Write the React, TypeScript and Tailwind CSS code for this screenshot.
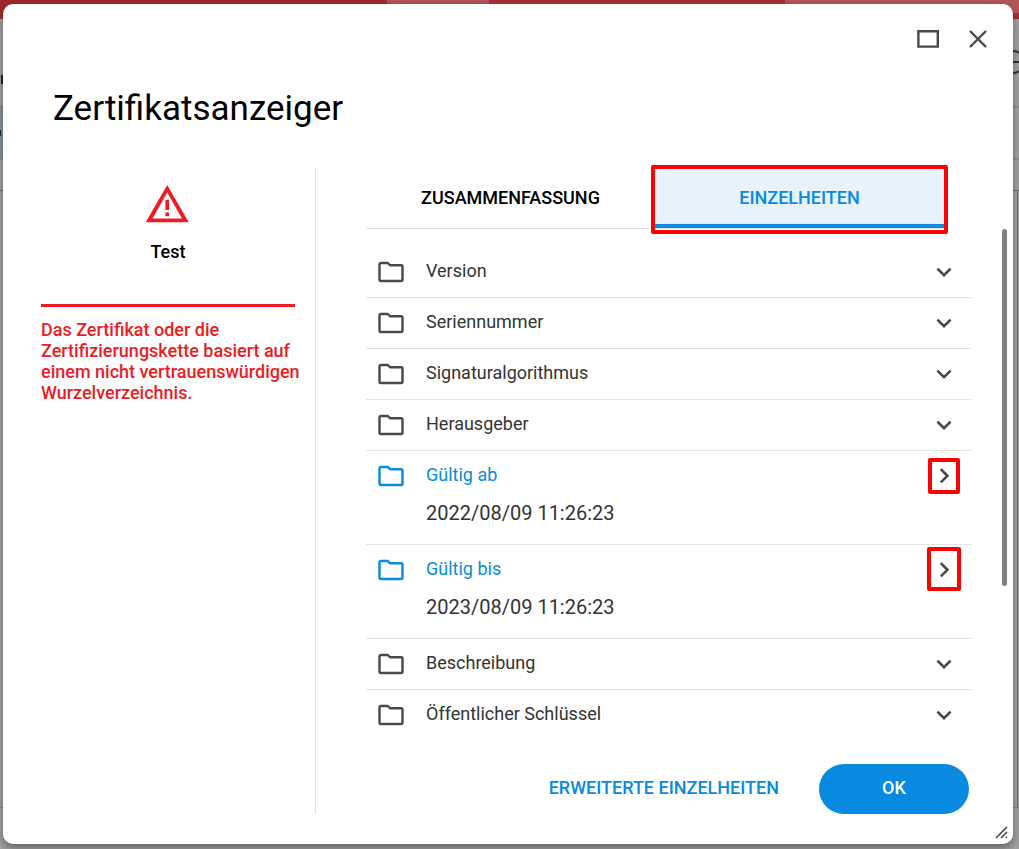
import { useState } from "react";

type Entry = { label: string; value?: string; mark?: "small" | "large" };

const entries: Entry[] = [
  { label: "Version" },
  { label: "Seriennummer" },
  { label: "Signaturalgorithmus" },
  { label: "Herausgeber" },
  { label: "Gültig ab", value: "2022/08/09 11:26:23", mark: "small" },
  { label: "Gültig bis", value: "2023/08/09 11:26:23", mark: "large" },
  { label: "Beschreibung" },
  { label: "Öffentlicher Schlüssel" },
];

function FolderIcon() {
  return (
    <svg width="26" height="22" viewBox="0 0 26 22" fill="none" stroke="currentColor" strokeWidth="2.4" strokeLinejoin="round" aria-hidden="true">
      <path d="M2.6 2H9.8L12 4.2H23Q24.5 4.2 24.5 5.6V18.6Q24.5 20 23 20H2.9Q1.5 20 1.5 18.6V3.3Q1.5 2 2.6 2Z" />
    </svg>
  );
}

function Chevron({ open }: { open: boolean }) {
  return (
    <svg width="16" height="16" viewBox="0 0 16 16" fill="none" stroke="currentColor" strokeWidth="2.6" aria-hidden="true">
      <path d={open ? "M4.8 1.2 11.4 7.8 4.8 14.4" : "M1.4 4.6 8 11.2 14.6 4.6"} />
    </svg>
  );
}

function Backdrop() {
  return (
    <div className="absolute inset-0 -z-10 flex flex-col bg-[#a2a2a2]" aria-hidden="true">
      <div className="flex h-[19px] shrink-0 bg-[#a83033]">
        <div className="w-[38%] bg-[#a0282b]" />
        <div className="w-[10%] bg-[#b35358]" />
        <div className="w-[29%] bg-[#a83033]" />
        <div className="flex-1 border-b-[6px] border-[#a83033] bg-[#b3565b]" />
      </div>
      <div className="h-[89px] border-b-2 border-[#8e8e8e]" />
      <div className="h-[52px] border-b-2 border-[#8e8e8e] bg-gradient-to-r from-[#8a949d] to-[#a2a2a2]" />
      <div className="h-[31px] border-b border-[#707070]" />
      <div className="mr-px flex-1 border-r border-[#707070]" />
      <div className="h-[42px] border-t border-[#858585]" />
      <svg className="absolute top-[48px] right-0" width="6" height="28" fill="none" stroke="#333" strokeWidth="2">
        <path d="M0 3Q4 3 6 5M0 14H6M0 25Q4 25 6 23" />
      </svg>
      <div className="absolute top-[75px] left-px h-[9px] w-0.5 bg-[#222]" />
      <div className="absolute top-[130px] left-0 h-[6px] w-px bg-[#142850]" />
    </div>
  );
}

export default function App() {
  const [open, setOpen] = useState<string[]>(["Gültig ab", "Gültig bis"]);
  const toggle = (label: string) =>
    setOpen((o) => (o.includes(label) ? o.filter((l) => l !== label) : [...o, label]));

  return (
    <div className="relative isolate flex min-h-screen flex-col overflow-hidden pt-1 pr-[6px] pb-[5px] pl-[3px] font-[Roboto,sans-serif] text-black">
      <Backdrop />
      <div
        role="dialog"
        aria-labelledby="dialog-title"
        className="relative flex flex-1 flex-col rounded-[10px] bg-white pb-[30px] shadow-[0_4px_8px_rgba(0,0,0,0.4)]"
      >
        <div className="flex justify-end gap-5 px-5 pt-5 text-[#484848]">
          <button type="button" aria-label="Maximieren" className="flex size-[30px] items-center justify-center">
            <svg width="22" height="18" viewBox="0 0 22 18" fill="none" stroke="currentColor" strokeWidth="2.4">
              <path d="M1.4 1.2H20.8V16.6H1.4Z" />
            </svg>
          </button>
          <button type="button" aria-label="Schließen" className="flex size-[30px] items-center justify-center">
            <svg width="18" height="18" viewBox="0 0 18 18" fill="none" stroke="currentColor" strokeWidth="2.4">
              <path d="M1 1 17 17M17 1 1 17" />
            </svg>
          </button>
        </div>
        <h1 id="dialog-title" className="mt-8 px-[50px] text-[35px] leading-[46px]">
          Zertifikatsanzeiger
        </h1>

        <div className="mt-[37px] flex flex-1">
          <aside className="ml-[38px] flex w-[275px] shrink-0 flex-col border-r border-[#e3e3e3] text-lg leading-[21px] font-medium">
            <div className="mr-5 flex flex-col items-center border-b-[3px] border-[#ed1c24] pt-4 pb-[42px]">
              <svg width="44" height="38" viewBox="0 0 44 38" fill="#ed1c24" aria-hidden="true">
                <path fillRule="evenodd" d="M21.2 0 42.7 37.3H-.3ZM21.2 7.4 6.5 33.6H35.9Z" />
                <path d="M19.4 14.8h3.6v10.2h-3.6ZM19.4 27.6h3.6v3.6h-3.6Z" />
              </svg>
              <p className="mt-[18px]">Test</p>
            </div>
            <p className="mr-3 pt-3 text-[#ed1c24]">
              Das Zertifikat oder die Zertifizierungskette basiert auf einem nicht vertrauenswürdigen
              Wurzelverzeichnis.
            </p>
          </aside>

          <section className="flex flex-1 flex-col pr-[6px] pl-[50px]">
            <div role="tablist" className="mr-[63px] flex h-[60px] border-b border-[#e3e3e3] text-lg font-medium">
              <button type="button" role="tab" aria-selected={false} className="flex-1 pb-0.5">
                ZUSAMMENFASSUNG
              </button>
              <button
                type="button"
                role="tab"
                aria-selected={true}
                className="relative flex-1 border-b-4 border-[#078adf] bg-[#e6f3fd] pt-0.5 text-[#078adf]"
              >
                EINZELHEITEN
                <span className="pointer-events-none absolute -inset-x-1 -top-1 -bottom-[10px] rounded-xs border-4 border-[#ff0000]" />
              </button>
            </div>

            <div className="flex flex-1 justify-between">
              <ul className="mr-[31px] flex-1 pt-[18px] text-lg">
                {entries.map((e, i) => {
                  const isOpen = open.includes(e.label);
                  return (
                    <li key={e.label} className={i < entries.length - 1 ? "border-b border-[#e3e3e3]" : ""}>
                      <button
                        type="button"
                        aria-expanded={isOpen}
                        onClick={() => toggle(e.label)}
                        className={`flex h-[50px] w-full items-center pr-[19px] pl-3 ${isOpen ? "text-[#078adf]" : "text-[#484848]"}`}
                      >
                        <FolderIcon />
                        <span className={`ml-[22px] flex-1 pb-[2px] text-left ${isOpen ? "" : "text-[#333]"}`}>{e.label}</span>
                        <span className="relative text-[#484848]">
                          <Chevron open={isOpen} />
                          {e.mark === "small" && (
                            <span className="pointer-events-none absolute -inset-x-2 -inset-y-[10px] rounded-xs border-4 border-[#ff0000]" />
                          )}
                          {e.mark === "large" && (
                            <span className="pointer-events-none absolute -inset-x-[9px] -top-[15px] -bottom-[13px] rounded-xs border-4 border-[#ff0000]" />
                          )}
                        </span>
                      </button>
                      {isOpen && <p className="h-[43px] pl-[60px] text-xl leading-6 text-[#333]">{e.value}</p>}
                    </li>
                  );
                })}
              </ul>
              <div className="h-[357px] w-[5px] rounded-full bg-[#808080]" />
            </div>

            <div className="mt-auto mr-[38px] flex items-center justify-end gap-10 text-lg font-medium">
              <button type="button" className="h-[50px] pb-0.5 text-[#078adf]">
                ERWEITERTE EINZELHEITEN
              </button>
              <button type="button" className="h-[50px] w-[150px] rounded-full bg-[#078adf] pb-0.5 text-white">
                OK
              </button>
            </div>
          </section>
        </div>

        <svg className="absolute right-[5px] bottom-[5px]" width="13" height="13" viewBox="0 0 13 13" fill="none" stroke="#484848" strokeWidth="1.6" aria-hidden="true">
          <path d="M1 12 12 1M6 12 12 6M10.8 12 12 10.8" />
        </svg>
      </div>
    </div>
  );
}
